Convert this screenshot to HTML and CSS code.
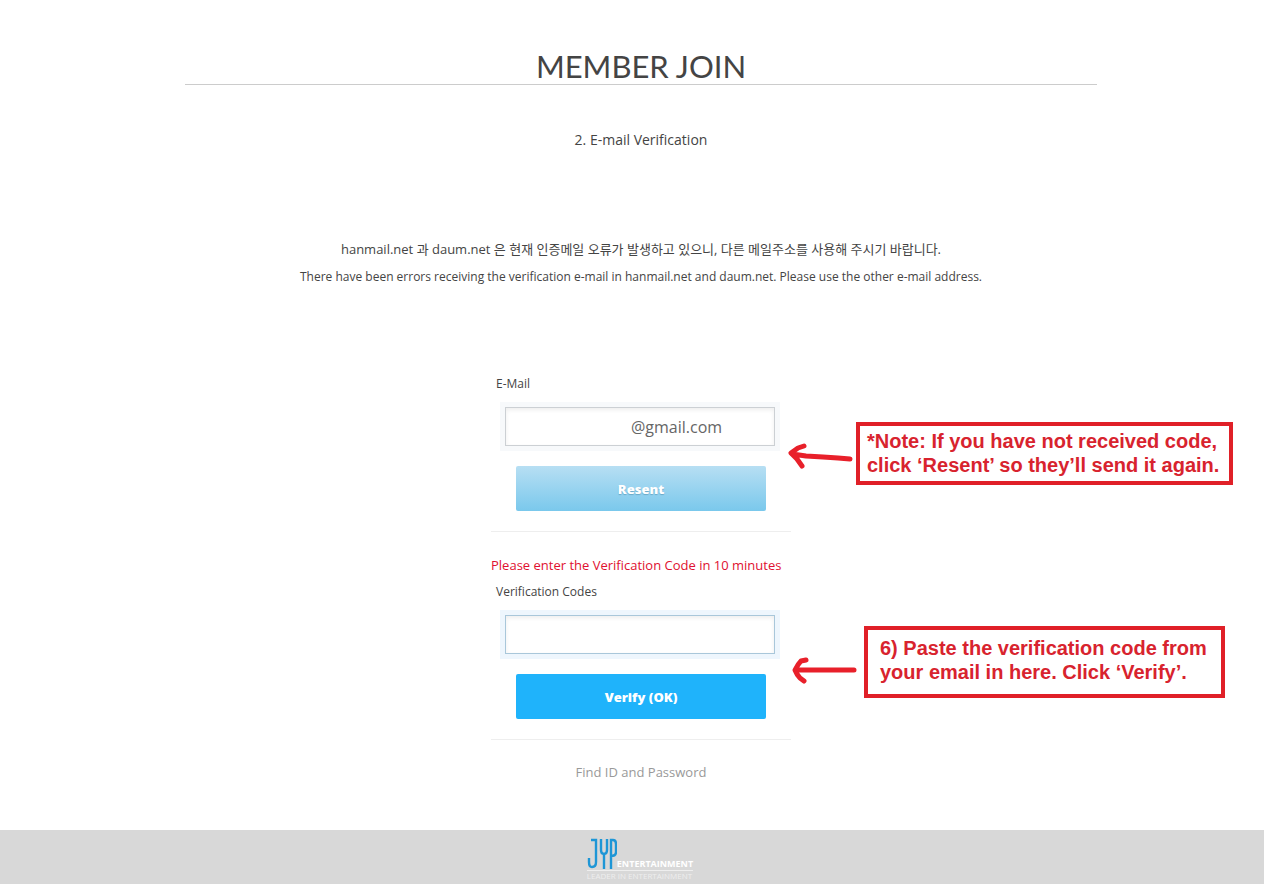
FILE: index.html
```html
<!DOCTYPE html>
<html lang="en">
<head>
<meta charset="utf-8">
<title>Member Join</title>
<link rel="stylesheet" href="styles.css">
</head>
<body>
<main class="page">
  <h1 class="title">MEMBER JOIN</h1>
  <h2 class="step">2. E-mail Verification</h2>
  <div class="notice">
    <p class="korean" lang="ko">hanmail.net 과 daum.net 은 현재 인증메일 오류가 발생하고 있으니, 다른 메일주소를 사용해 주시기 바랍니다.</p>
    <p>There have been errors receiving the verification e-mail in hanmail.net and daum.net. Please use the other e-mail address.</p>
  </div>
  <form class="form">
    <section class="group">
      <label class="label" for="email">E-Mail</label>
      <input class="field field-email" id="email" type="text" value="@gmail.com">
      <button class="button button-resend" type="button">Resent</button>
      <aside class="callout callout-resend">
        <svg class="arrow" width="68" height="34" viewBox="0 0 68 34"><path d="M62 22 L50 21 L35 20 L18 19 L4 17 M16 9 L10 11 L3 16 L9 22 L14 29"/></svg>
        <p class="note">*Note: If you have not received code,<br>click ‘Resent’ so they’ll send it again.</p>
      </aside>
    </section>
    <section class="group group-code">
      <p class="warning">Please enter the Verification Code in 10 minutes</p>
      <label class="label" for="code">Verification Codes</label>
      <input class="field field-code" id="code" type="text">
      <button class="button button-verify" type="submit">Verify (OK)</button>
      <aside class="callout callout-verify">
        <svg class="arrow" width="76" height="46" viewBox="0 0 76 46"><path d="M66 31 H8 M18 21 L13 22 Q10 25 7 31 Q9 36 12 39 L16 42"/></svg>
        <p class="note note-verify">6) Paste the verification code from<br>your email in here. Click ‘Verify’.</p>
      </aside>
    </section>
  </form>
  <a class="find" href="#">Find ID and Password</a>
</main>
<footer class="footer">
  <div class="brand">
    <svg class="mark" width="30" height="32" viewBox="0 0 30 32"><path d="M4 2 H9 V24 Q9 29 5 29 Q2 29 2 24 V20 M14 1 V12 Q14 16 17 16 Q20 16 20 12 V1 M17 16 V31 M24 31 V2 H26 Q29 2 29 6 V14 Q29 18 24 18"/></svg>
    <span class="brand-name">ENTERTAINMENT</span>
    <span class="brand-tag">LEADER IN ENTERTAINMENT</span>
  </div>
</footer>
</body>
</html>
```
FILE: styles.css
```css
* { box-sizing: border-box; }
body {
  margin: 0;
  min-height: 100vh;
  display: flex;
  flex-direction: column;
  background: #fff;
  color: #444;
  font: 12px/28px "Open Sans", "Noto Sans CJK KR", sans-serif;
}
h1, h2, p { margin: 0; font-weight: 400; }
.page {
  flex: 1;
  display: flex;
  flex-direction: column;
  align-items: center;
  padding: 48px 0 39px 18px;
}
.title {
  width: 73.2%;
  border-bottom: 1px solid #ccc;
  text-align: center;
  font-family: Lato, sans-serif;
  font-size: 31px;
  line-height: 36px;
}
.step { margin-top: 41px; font-size: 14px; }
.notice { margin-top: 81px; text-align: center; }
.korean { font-size: 13px; }
.form { width: 300px; margin-top: 80px; }
.group {
  position: relative;
  display: flex;
  flex-direction: column;
  padding-bottom: 20px;
  border-bottom: 1px solid #eee;
}
.group-code { padding-top: 19px; }
.label { padding-left: 5px; line-height: 26px; }
.warning { color: #e01030; font-size: 13px; line-height: 28px; white-space: nowrap; }
.field {
  margin: 10px 16px 0 14px;
  height: 39px;
  border: 1px solid #ccd0d4;
  outline: 0;
  background: #fff;
  color: #666;
  font: 16px "Open Sans", sans-serif;
}
.field-email {
  padding-left: 125px;
  box-shadow: 0 0 0 5px #f7f9fb, inset 0 2px 4px #eee;
}
.field-code {
  border-color: #a9c7da;
  box-shadow: 0 0 0 5px #eef6fd, inset 0 2px 4px #eee;
}
.button {
  height: 45px;
  margin: 20px 25px 0;
  border: 0;
  border-radius: 2px;
  color: #fff;
  font: 800 13px "Open Sans", sans-serif;
}
.button-resend {
  background: linear-gradient(#b7dff3, #7ac8ec);
  text-shadow: 0 1px 1px #6aa9c8;
}
.button-verify { background: #1fb3fb; }
.callout {
  position: absolute;
  left: 100%;
  display: flex;
  align-items: center;
  margin-left: -3px;
  white-space: nowrap;
}
.callout-resend { top: 51px; }
.callout-verify { top: 94px; }
.arrow {
  fill: none;
  stroke: #e8202a;
  stroke-width: 5;
  stroke-linecap: round;
  stroke-linejoin: round;
}
.note {
  border: 4px solid #e02028;
  padding: 3px 10px 4px 7px;
  color: #d8232e;
  font: bold 20px/24px "Liberation Sans", sans-serif;
}
.note-verify { padding: 6px 14px 10px 12px; }
.find { margin-top: 18px; color: #999; font-size: 13px; text-decoration: none; }
.footer {
  display: flex;
  justify-content: center;
  padding: 8px 0 4px 16px;
  background: #d8d8d8;
}
.brand {
  display: grid;
  grid-template-columns: 30px auto;
  align-items: end;
  color: #fff;
}
.mark { fill: none; stroke: #1e96d6; stroke-width: 2.4; }
.brand-name { font: bold 9px/12px "Open Sans", sans-serif; }
.brand-tag {
  grid-column: 1 / 3;
  border-top: 1px solid #eee;
  color: #eee;
  font: 8px/9px "Open Sans", sans-serif;
}
```
